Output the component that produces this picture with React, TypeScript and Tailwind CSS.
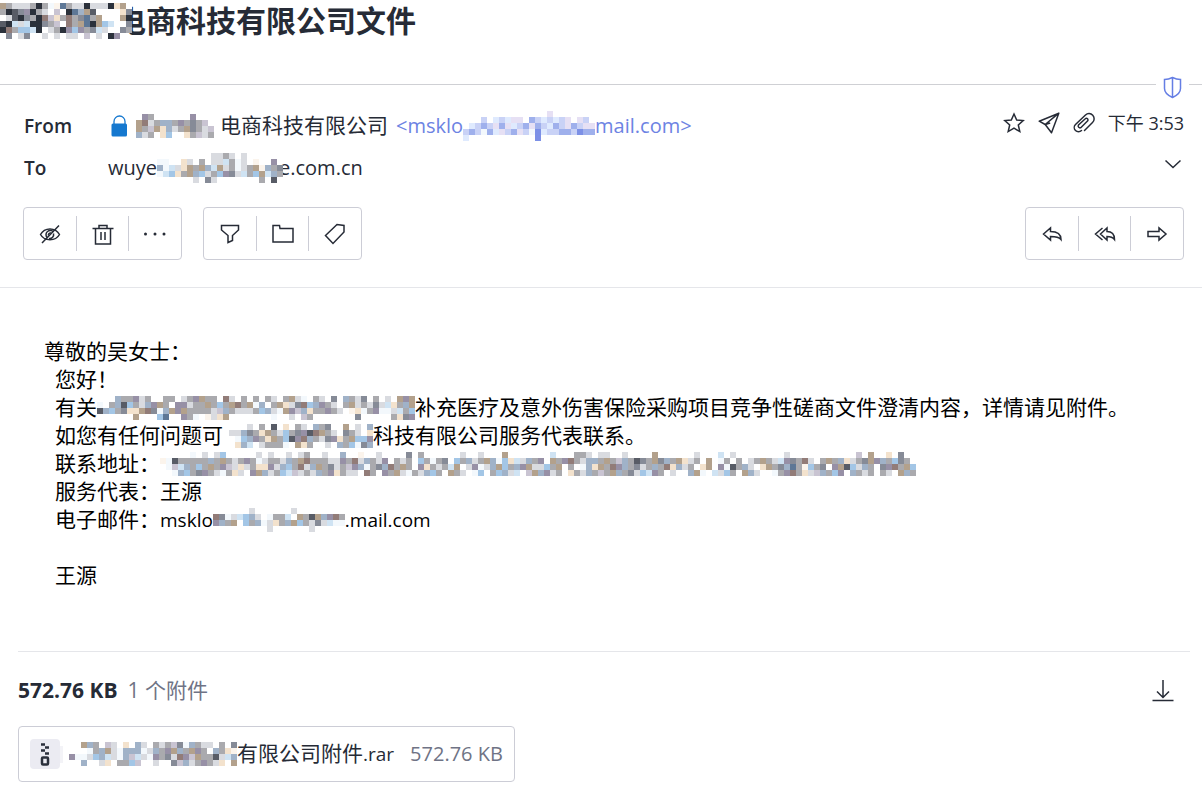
import type { ReactNode } from "react";

const COLORS: Record<string, string> = {
  w: "#ffffff",
  x: "#2b313b",
  k: "#585c66",
  g: "#aaaaae",
  d: "#868b97",
  b: "#a0b2c8",
  l: "#cfe3f3",
  t: "#b3a18c",
  c: "#f3e2cd",
  p: "#9790a6",
  s: "#d9dbe0",
  r: "#927c78",
  n: "#5d7796",
  a: "#a3c6e6",
  v: "#c9c4d2",
  y: "#f3f8fc",
  f: "#fbf4ec",
  e: "#9fb0ec",
  h: "#c9d2f6",
  j: "#e6e0f4",
  q: "#dfeafe",
  z: "#7c90e6",
};

const TITLE_MASK = [
  "tgsssgxgyfngssxsssxctw",
  "gxkdpxgswvwxnbtkwwwwcd",
  "wskxdgxrvcgrgdngtwwwtx",
  "kxlslxxdgvwrgtnxtalwwd",
  "xrgaalxwsgxpapgdlswwdg",
  ".d.sd..s.s.ss.v.s.xp..",
];

const FROM_MASK = [
  ".pg......p...",
  "trsgbbgpgdgv.",
  "tgvtcbsgtdgsv",
  "bsg.ca..cgvsg",
];

const TO_MASK = [
  ".........ssgs.s......",
  "yy..cs.g.sslgys.f..p.",
  "bylsctgtbltsgysgtfbgd",
  "ylacgtbasgapdslgatlbg",
  "......s.ds.......g.k.",
];

const SENDER_MASK = [
  "..............j.......",
  "...h.qhqjj.ehqhqhj.jh.",
  ".qhehjejqhejehqehjehjj",
  "hehyeqjhejhyzqhheehzee",
  "q...........z.........",
];

const SUBJECT_MASK = [
  "...bggpsg..gg.sgptgg.rs.g.g.gs.gtsy.gs.d.bgsd.g.s.tpt",
  "y.gbkagsbptg.ppsggtgagtrgtyb.gtcsdrabpgs.gtsgsdslcgbt",
  "kbagdcctrdybtptggggsvbgsssgabsytpvbcggpgs.fcygpyyslga",
  "......t...an..pgy.fsct.......y..s.vg.......d.....gcdp",
];

const COMPANY_MASK = [
  "....s.g.k.c.gs.bgd..t.s.b",
  ".ssbdgctgsagdpkrtgs.dgs.c",
  "..yabpgctgakprbgsdpcgtaap",
  "..cbl.sgggy.tcg..s.bgaydb",
];

const ADDRESS_MASK = [
  ".....y.s.sa.....s.s..s.sg..s..b..f..s....d.g......s..s...t.......l...ggs.ss..s....t......s...l.s........s...........v.t..c.d..",
  "fykgggggbgtgsgpgysggsbgtrgggsspgrsbgsp.gsg.agygd.agbsgtbyaclsbgp.tgprgsbbgtgvbgkdgtdbgtcsg.t.yg.gwsgtgslpdgrs.gtgbcsgdtpbgadg.",
  ".yvlbgagtgpvscsgccpsbagrsbtgdsgvpbygdbrgtgwpcgsglt.spysbtagbptssagtwg.ybctgrpbgdsgbgrcbsg.ct.pykgbs.ctgdbngfagd.ptkasbgwdprgta",
  "..ybagdpgsygcs.ptbsgalvsgsbgpcgsswrg.pgtsygsbag.tgs.ya.gabsl.vtbpsg.cgsbgvgtbgdsalpg.s..bty.lsag.tbs..ygprgcsvbgap.bgsg.gs.tbg",
];

const EMAIL_MASK = [
  "......s......s........",
  "rdyslabs.yggl.tgktbprg",
  "pbgtwagbyscgbtagsdslyy",
  ".........s......s.....",
];

const FILE_MASK = [
  "..tbg.vs.c.bs.gsgvdybgss.g.d",
  "...ygbtsybbbysbgptbgtpgwbgcf",
  "pyysablsybvlsypgdsrpvtggkslb",
  "..b..sc.ggav..s..dvbsgpgsc.t",
];

// Pixelated block that hides private text
const Mosaic = ({ rows, className = "" }: { rows: string[]; className?: string }) => {
  const cols = Math.max(...rows.map((row) => row.length));
  return (
    <svg
      width={cols * 6}
      height={rows.length * 6}
      shapeRendering="crispEdges"
      aria-hidden="true"
      className={`relative shrink-0 ${className}`}
    >
      {rows.map((row, y) =>
        row
          .split("")
          .map((cell, x) =>
            COLORS[cell] ? (
              <rect key={`${x}-${y}`} x={x * 6} y={y * 6} width="6" height="6" fill={COLORS[cell]} />
            ) : null
          )
      )}
    </svg>
  );
};

const Icon = ({ children, size = 22 }: { children: ReactNode; size?: number }) => (
  <svg
    width={size}
    height={size}
    viewBox="0 0 22 22"
    fill="none"
    stroke="currentColor"
    strokeWidth="1.5"
    aria-hidden="true"
  >
    {children}
  </svg>
);

const ToolButton = ({ label, children }: { label: string; children: ReactNode }) => (
  <button
    type="button"
    aria-label={label}
    className="flex flex-1 cursor-pointer items-center justify-center hover:text-black"
  >
    {children}
  </button>
);

const ToolGroup = ({ children }: { children: ReactNode }) => (
  <div className="flex h-[53px] w-[159px] divide-x divide-[#cccdd6] rounded border border-[#cccdd6] py-2">
    {children}
  </div>
);

const Line = ({ children }: { children?: ReactNode }) => (
  <div className="flex h-7 items-center whitespace-pre pl-[11px]">{children}</div>
);

const Header = () => (
  <header className="border-b border-[#e5e6ea] pb-[27px] pl-6 pr-[18px]">
    <div className="flex justify-between">
      <dl>
        <div className="flex h-[42px] items-center">
          <dt className="w-[84px] text-[19px] font-semibold">From</dt>
          <dd className="flex items-center">
            <svg width="24" height="22" viewBox="0 0 24 22" aria-hidden="true" className="mr-1">
              <path d="M6 10V6.500a5.500 5.500 0 0 1 11 0V10" fill="none" stroke="#1578cf" strokeWidth="1.300" />
              <rect x="3.500" y="8.500" width="15.500" height="13" rx="1.500" fill="#1578cf" />
            </svg>
            <Mosaic rows={FROM_MASK} />
            <span className="ml-1.5 text-[21px]">电商科技有限公司</span>
            <a href="#sender" className="ml-2 flex items-center text-xl text-[#6d83e3]">
              &lt;msklo
              <Mosaic rows={SENDER_MASK} />
              mail.com&gt;
            </a>
          </dd>
        </div>
        <div className="flex h-[42px] items-center">
          <dt className="w-[84px] text-[19px] font-semibold">To</dt>
          <dd className="flex items-center text-xl">
            wuye
            <Mosaic rows={TO_MASK} className="-mr-1" />
            e.com.cn
          </dd>
        </div>
      </dl>

      <div className="flex flex-col items-end">
        <div className="flex h-9 items-center gap-[13px]">
          <button type="button" aria-label="Star" className="cursor-pointer">
            <Icon>
              <path d="M11 2l2.700 6 6.500.6-4.900 4.400 1.500 6.600-5.800-3.400-5.800 3.400L6.700 13 1.800 8.600l6.500-.6z" />
            </Icon>
          </button>
          <Icon>
            <path
              d="M20.800 1.200L1.200 9.200l6 3.300 6.300 8.300zM7.200 12.500L20.800 1.200M7.200 12.500l5-1.500"
              strokeLinejoin="round"
            />
          </Icon>
          <Icon>
            <path
              d="M8 15.500l6.500-6.500a1.500 1.500 0 0 0-2.200-2.200L5.500 13a1.800 1.800 0 0 0 2.500 2.500M11.500 18.500l8-8a5 5 0 0 0-7-7.500L2.500 12.500a4.200 4.200 0 0 0 6 6"
              strokeLinecap="round"
            />
          </Icon>
          <time className="text-lg">下午 3:53</time>
        </div>
        <button type="button" aria-label="Show details" className="flex h-12 cursor-pointer items-center">
          <Icon>
            <path d="M3.500 6.500l7.500 7 7.500-7" />
          </Icon>
        </button>
      </div>
    </div>

    <div className="mt-[18px] flex gap-[21px]">
      <div className="-ml-px">
        <ToolGroup>
          <ToolButton label="Mark as unread">
            <Icon>
              <path d="M1.500 11.500c4-7.500 15-7.500 19 0-4 7-15 7-19 0zM3 20L20 2.500" />
              <path d="M8 14.500a4 4 0 0 1 6.500-5.500M14.500 10.500a4 4 0 0 1-4.500 5M9.500 12.500a2 2 0 0 1 2.500-2.500" />
            </Icon>
          </ToolButton>
          <ToolButton label="Move to trash">
            <Icon>
              <path d="M.5 5.500h21M3.500 5.500V21h15V5.500M7 5.500v-3h8v3M9 9v8M13 9v8" />
            </Icon>
          </ToolButton>
          <ToolButton label="More">
            <Icon>
              <g fill="currentColor" stroke="none">
                <circle cx="1.500" cy="11" r="1.500" />
                <circle cx="11" cy="11" r="1.500" />
                <circle cx="20" cy="11" r="1.500" />
              </g>
            </Icon>
          </ToolButton>
        </ToolGroup>
      </div>
      <ToolGroup>
        <ToolButton label="Filter">
          <Icon>
            <path d="M2.500 2.500h17v4.500l-6 5.500v5l-4.500 2v-7l-6.500-5.500z" />
          </Icon>
        </ToolButton>
        <ToolButton label="Move to folder">
          <Icon>
            <path d="M1 19V2.500h6.500l.5 3h13V19z" />
          </Icon>
        </ToolButton>
        <ToolButton label="Label as">
          <Icon>
            <path d="M1.500 12.500L13 1.500l7 1v6.500L9 20.500z" />
          </Icon>
        </ToolButton>
      </ToolGroup>
      <div className="ml-auto">
        <ToolGroup>
          <ToolButton label="Reply">
            <Icon>
              <path d="M2.500 11l7-6v3.500c6.500 0 10.500 2.500 10.500 8-2-2.500-5-3-10.500-3V17z" />
            </Icon>
          </ToolButton>
          <ToolButton label="Reply all">
            <Icon>
              <path d="M6.500 11l6.500-6v3.500c4.500 0 7.500 2.500 7.500 8-2-2.500-4-3-7.500-3V17zM8.500 5l-7 6 7 6" />
            </Icon>
          </ToolButton>
          <ToolButton label="Forward">
            <Icon>
              <path d="M2 8.500h11V5l7 6-7 6v-3.500H2z" />
            </Icon>
          </ToolButton>
        </ToolGroup>
      </div>
    </div>
  </header>
);

const MessageBody = () => (
  <main className="pl-[44px] pt-[50px] text-[21px] text-black">
    <div className="flex h-7 items-center">尊敬的吴女士：</div>
    <Line>您好！</Line>
    <Line>
      有关
      <Mosaic rows={SUBJECT_MASK} />
      补充医疗及意外伤害保险采购项目竞争性磋商文件澄清内容，详情请见附件。
    </Line>
    <Line>
      如您有任何问题可
      <Mosaic rows={COMPANY_MASK} />
      科技有限公司服务代表联系。
    </Line>
    <Line>
      联系地址：
      <Mosaic rows={ADDRESS_MASK} />
    </Line>
    <Line>服务代表：王源</Line>
    <Line>
      电子邮件：
      <span className="flex items-center text-[19px]">
        msklo
        <Mosaic rows={EMAIL_MASK} />
        .mail.com
      </span>
    </Line>
    <Line />
    <Line>王源</Line>
  </main>
);

const Attachments = () => (
  <footer className="ml-[18px] mr-3 mt-[61px] border-t border-[#e5e6ea]">
    <div className="flex h-[74px] items-center pr-4 pt-1">
      <strong className="text-[21px] font-bold">572.76 KB</strong>
      <span className="ml-2.5 text-[21px] text-[#6f7385]">1 个附件</span>
      <button type="button" aria-label="Download all" className="ml-auto cursor-pointer">
        <Icon>
          <path d="M11 0v17M5 11.500l6 6 6-6M.5 20.500h21" />
        </Icon>
      </button>
    </div>
    <a href="#attachment" className="inline-flex h-14 items-center rounded border border-[#cccdd6] px-[11px]">
      <svg width="33" height="30" viewBox="0 0 33 30" aria-hidden="true">
        <rect x="29" y="7" width="4" height="17" fill="#f3f3f7" />
        <rect width="30" height="30" rx="4" fill="#ebebf2" />
        <path d="M11 5.500h4M15 8.500h4M11 11.500h4M15 14.500h4" stroke="#2b303c" strokeWidth="2.500" />
        <rect x="12" y="18.500" width="6" height="7" rx="1" fill="#ebebf2" stroke="#2b303c" strokeWidth="2.500" />
      </svg>
      <Mosaic rows={FILE_MASK} className="ml-1.5" />
      <span className="text-[21px]">有限公司附件</span>
      <span className="text-[19px]">.rar</span>
      <span className="ml-4 text-xl text-[#6f7385]">572.76 KB</span>
    </a>
  </footer>
);

const App = () => {
  return (
    <div className="min-h-screen bg-white pb-6 font-['Open_Sans','Noto_Sans_CJK_SC',sans-serif] text-[#262b36]">
      <h1 className="flex h-[42px] items-center text-3xl font-bold">
        <Mosaic rows={TITLE_MASK} className="z-10 -mr-4" />
        <span>电商科技有限公司文件</span>
      </h1>

      <div className="mt-[34px] flex items-start">
        <div className="mt-2 h-px flex-1 bg-[#cfd0d4]" />
        <svg
          width="33"
          height="29"
          viewBox="0 0 33 29"
          fill="none"
          stroke="#657ee4"
          strokeWidth="1.500"
          aria-hidden="true"
        >
          <path d="M16.500 1.500c-3 1.500-5.500 2-8 2v9c0 4.500 3.500 7 8 9 4.500-2 8-4.500 8-9v-9c-2.500 0-5-.5-8-2zV21" />
        </svg>
        <div className="mt-2 h-px w-[13px] bg-[#cfd0d4]" />
      </div>

      <Header />
      <MessageBody />
      <Attachments />
    </div>
  );
};

export default App;
